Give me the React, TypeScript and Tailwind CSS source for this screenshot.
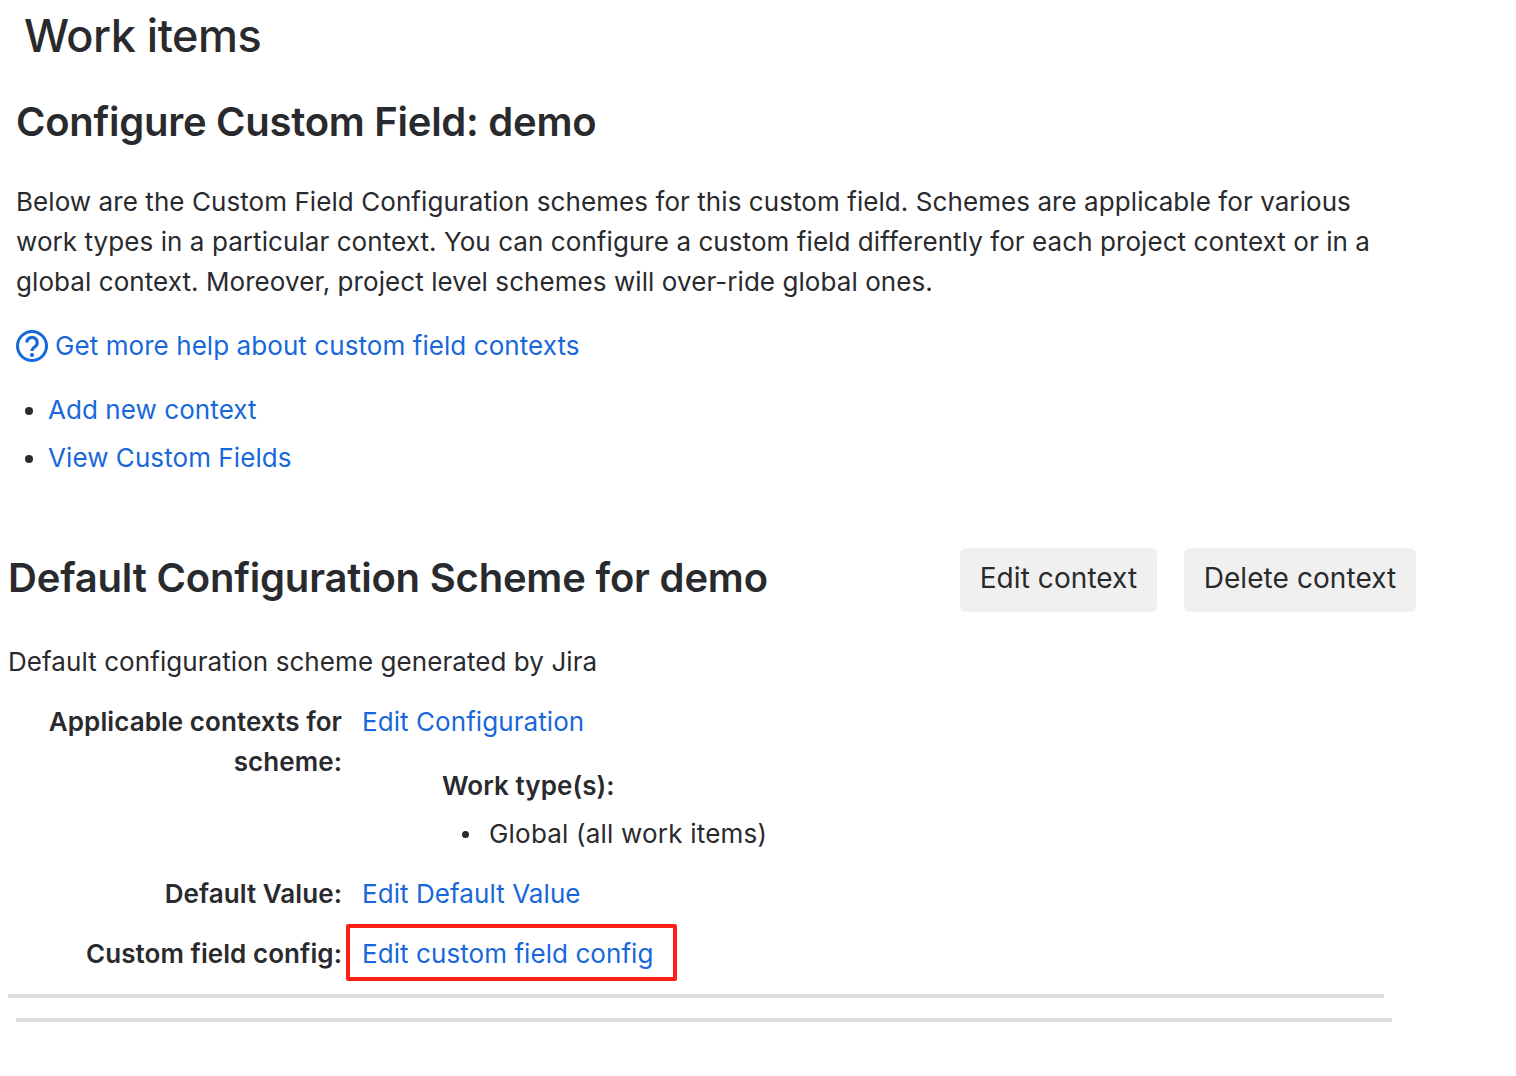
const linkClass = 'text-[#1868db]';
const labelClass = 'text-right font-semibold';

function HelpIcon() {
  return (
    <svg viewBox="0 0 32 32" fill="none" className="h-8 w-8 shrink-0" aria-hidden="true">
      <circle cx="16" cy="16" r="14.5" stroke="currentColor" strokeWidth="3" />
      <path d="M10.8 12.6a5.2 5.2 0 1 1 8.2 4.2c-1.9 1.3-3 2.2-3 4.2" stroke="currentColor" strokeWidth="3.2" />
      <circle cx="16" cy="25" r="2.1" fill="currentColor" />
    </svg>
  );
}

export default function App() {
  return (
    <div className="h-[1076px] bg-white font-['Inter','Liberation_Sans',sans-serif] text-[26px] leading-[40px] tracking-[0.07px] text-[#292a2e]">
      <h1 className="h-[72px] pl-[24px] text-[45px] font-medium leading-[71px] tracking-[-0.5px]">Work items</h1>
      <div className="w-[1392px] pl-4">
        <h2 className="mt-[22px] text-[40px] font-semibold leading-[56px] tracking-[-0.27px]">Configure Custom Field: demo</h2>
        <p className="mt-[32px]">
          Below are the Custom Field Configuration schemes for this custom field. Schemes are applicable for various work
          types in a particular context. You can configure a custom field differently for each project context or in a
          global context. Moreover, project level schemes will over-ride global ones.
        </p>
        <a className={`mt-6 flex items-center gap-[7px] ${linkClass}`}>
          <HelpIcon />
          Get more help about custom field contexts
        </a>
        <ul className="mt-6 flex list-disc flex-col gap-2 pl-8">
          <li><a className={linkClass}>Add new context</a></li>
          <li><a className={linkClass}>View Custom Fields</a></li>
        </ul>

        <div className="-ml-2 mr-2 mt-[70px]">
          <div className="flex h-16 items-center justify-between">
            <h2 className="pb-1 text-[40px] font-semibold tracking-[-0.2px]">Default Configuration Scheme for demo</h2>
            <div className="-mr-8 flex gap-[27px] text-[28px]">
              <button className="h-16 w-[197px] rounded-md bg-[#f0f0f0] pb-1">Edit context</button>
              <button className="h-16 w-[232px] rounded-md bg-[#f0f0f0] pb-1">Delete context</button>
            </div>
          </div>
          <p className="mt-[30px]">Default configuration scheme generated by Jira</p>
          <div className="mt-5 grid grid-cols-[334px_1fr]">
            <div className={`${labelClass} pl-[36px]`}>Applicable contexts for scheme:</div>
            <div className="pl-5">
              <a className={linkClass}>Edit Configuration</a>
              <div className="mt-6 pl-20 font-semibold">Work type(s):</div>
              <ul className="mt-2 pl-[100px] tracking-[0.2px]">
                <li className="flex items-center gap-5">
                  <span className="h-[7px] w-[7px] rounded-full bg-[#292a2e]" />
                  Global (all work items)
                </li>
              </ul>
            </div>
            <div className={`${labelClass} mt-5`}>Default Value:</div>
            <div className="mt-5 pl-5">
              <a className={linkClass}>Edit Default Value</a>
            </div>
            <div className={`${labelClass} mt-5`}>Custom field config:</div>
            <div className="mt-[10px]">
              <div className="ml-1 w-[331px] rounded-[2px] border-4 border-[#ff2015] pb-[3px] pl-3 pt-1.5">
                <a className={linkClass}>Edit custom field config</a>
              </div>
            </div>
          </div>
          <div className="mt-[13px] h-1 bg-[#dddddd]" />
        </div>
        <div className="mt-5 h-1 bg-[#dddddd]" />
      </div>
    </div>
  );
}
